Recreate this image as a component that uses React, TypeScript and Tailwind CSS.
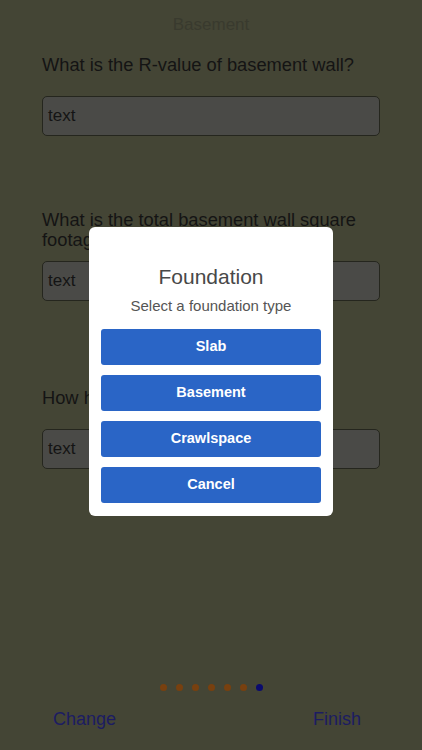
import React from "react";

const font = { fontFamily: '"Liberation Sans", Arial, sans-serif' };

function Field() {
  return (
    <div className="mx-[42px] h-[40px] rounded-[5px] border-[1.5px] border-[#25261e] bg-[#4a4a47] flex items-center pl-[5px] text-[17px] text-[#141414]">
      text
    </div>
  );
}

export default function App() {
  return (
    <div className="relative w-[422px] h-[750px] overflow-hidden bg-[#444535]" style={font}>
      <div className="flex flex-col h-full">
        <div className="h-[50px] flex items-center justify-center text-[17px] text-[#393a2e]">Basement</div>
        <div className="mx-[42px] mt-[4px] text-[18.3px] leading-[21px] text-[#141414]">
          What is the R-value of basement wall?
        </div>
        <div className="mt-[21px]">
          <Field />
        </div>
        <div className="mx-[42px] mt-[74px] text-[18.3px] leading-[20px] text-[#141414]">
          What is the total basement wall square footage?
        </div>
        <div className="mt-[11px]">
          <Field />
        </div>
        <div className="mx-[42px] mt-[86px] text-[18.3px] leading-[21px] text-[#141414]">
          How high is the basement wall?
        </div>
        <div className="mt-[21px]">
          <Field />
        </div>
        <div className="flex-1" />
        <div className="flex justify-center items-center gap-[9px] mb-[9.5px]">
          {[0, 1, 2, 3, 4, 5].map((i) => (
            <div key={i} className="w-[7px] h-[7px] rounded-full bg-[#78400f]" />
          ))}
          <div className="w-[7px] h-[7px] rounded-full bg-[#0b0b6e]" />
        </div>
        <div className="flex justify-between items-center h-[38px] mb-[12px] pl-[53px] pr-[61px] text-[18px] text-[#1c1c62]">
          <span>Change</span>
          <span>Finish</span>
        </div>
      </div>

      <div className="absolute left-[89px] top-[227px] w-[244px] h-[289px] bg-white rounded-[6px] flex flex-col px-[12px]">
        <div className="mt-[38px] text-center text-[21px] leading-[24px] text-[#484848]">Foundation</div>
        <div className="mt-[8px] text-center text-[15px] leading-[18px] text-[#555555]">Select a foundation type</div>
        <div className="mt-[14px] flex flex-col gap-[10.5px]">
          {["Slab", "Basement", "Crawlspace", "Cancel"].map((t) => (
            <div
              key={t}
              className="h-[35.5px] rounded-[3px] bg-[#2a65c6] flex items-center justify-center text-white font-bold text-[14.5px]"
            >
              {t}
            </div>
          ))}
        </div>
      </div>
    </div>
  );
}
